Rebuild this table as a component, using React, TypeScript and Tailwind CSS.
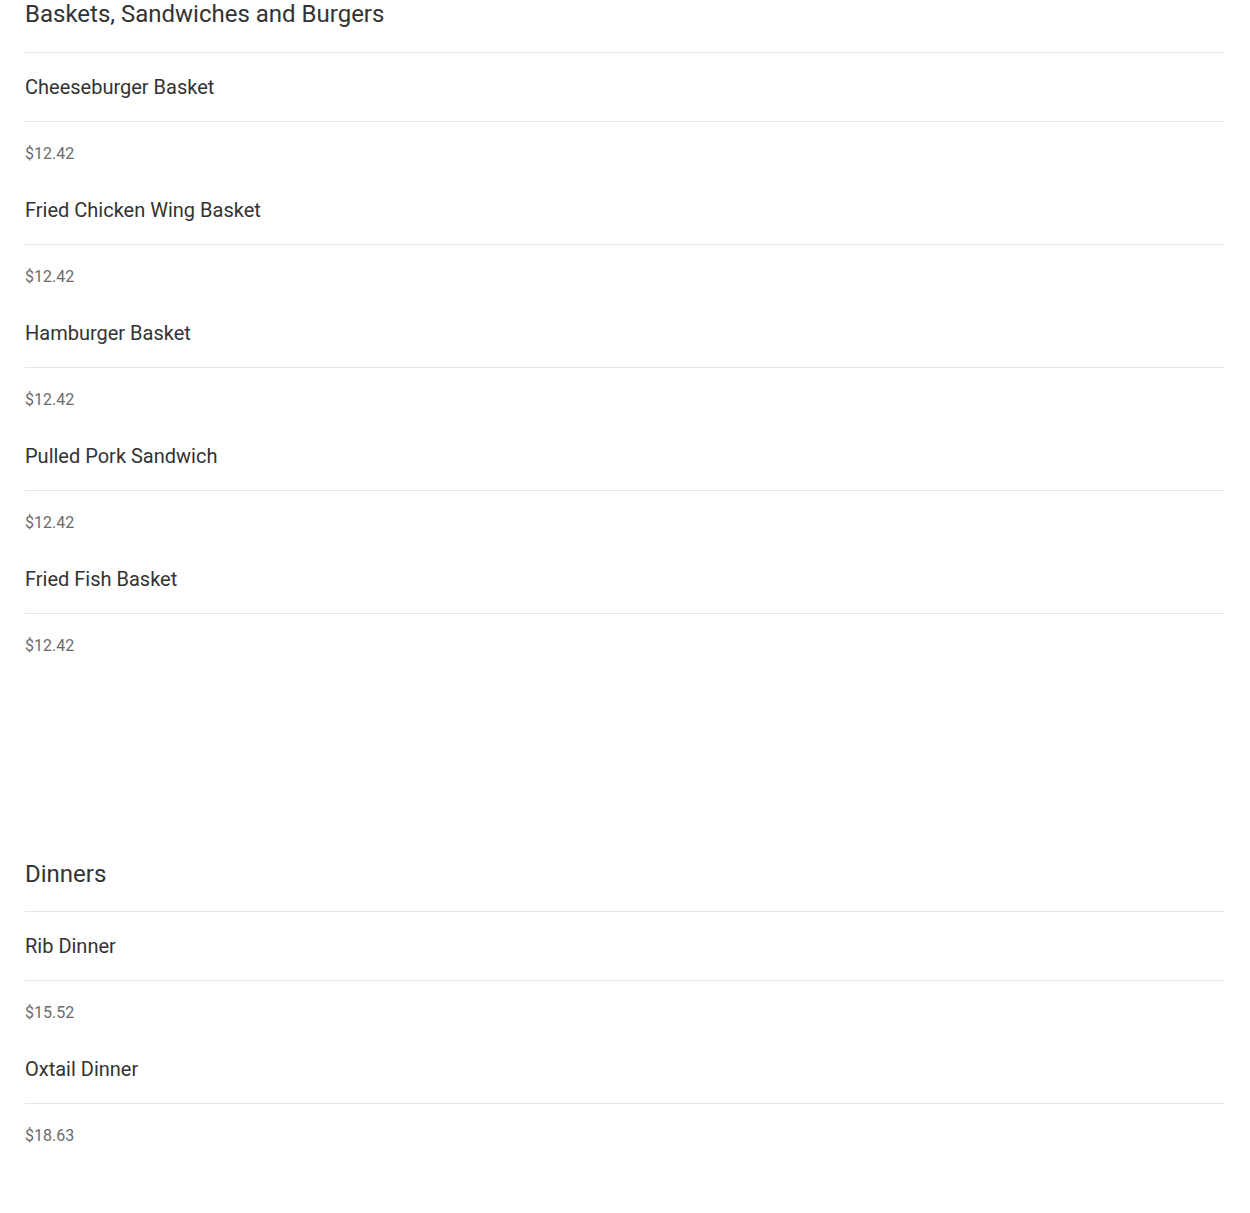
import React from "react";

type Item = { name: string; price: string };
type Section = { title: string; items: Item[] };

const sections: Section[] = [
  {
    title: "Baskets, Sandwiches and Burgers",
    items: [
      { name: "Cheeseburger Basket", price: "$12.42" },
      { name: "Fried Chicken Wing Basket", price: "$12.42" },
      { name: "Hamburger Basket", price: "$12.42" },
      { name: "Pulled Pork Sandwich", price: "$12.42" },
      { name: "Fried Fish Basket", price: "$12.42" },
    ],
  },
  {
    title: "Dinners",
    items: [
      { name: "Rib Dinner", price: "$15.52" },
      { name: "Oxtail Dinner", price: "$18.63" },
    ],
  },
];

export default function App() {
  return (
    <div className="min-h-[1213px] bg-white px-[25px] font-['Roboto',sans-serif]">
      {sections.map((s, si) => (
        <section key={s.title} className={si > 0 ? "mt-[191px]" : ""}>
          <h2
            className={
              si > 0
                ? "h-[53px] border-b border-[#e6e6e6] pt-px text-[24px] leading-7 font-normal text-[#333333]"
                : "h-[53px] border-b border-[#e6e6e6] text-[24px] leading-7 font-normal text-[#333333]"
            }
          >
            {s.title}
          </h2>
          {s.items.map((it) => (
            <div key={it.name}>
              <div className="flex h-[69px] items-center border-b border-[#e6e6e6] text-[20px] leading-6 text-[#333333]">
                {it.name}
              </div>
              <div className="h-[54px] pt-[20px] text-[16px] leading-6 text-[#6b6b6b]">
                {it.price}
              </div>
            </div>
          ))}
        </section>
      ))}
    </div>
  );
}
